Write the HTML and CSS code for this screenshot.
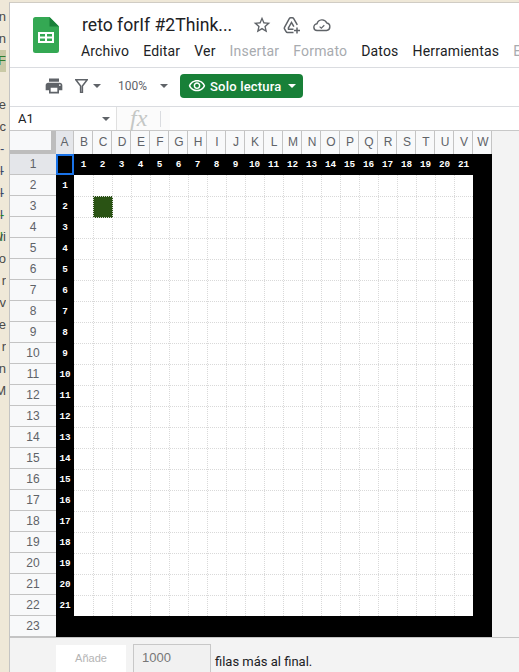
FILE: index.html
```html
<!DOCTYPE html>
<html lang="en">
<head>
  <meta charset="UTF-8">
  <meta name="viewport" content="width=device-width, initial-scale=1.0">
  <title>reto forIf #2ThinkBig</title>
  <link rel="stylesheet" href="styles.css">
</head>
<body>

  <div class="side">
    <div class="side-line">n</div>
    <div class="side-line">n</div>
    <div class="side-line side-active">F</div>
    <div class="side-line"></div>
    <div class="side-line">re</div>
    <div class="side-line">ic</div>
    <div class="side-line side-blue">-l</div>
    <div class="side-line side-blue">-l</div>
    <div class="side-line side-blue">-l</div>
    <div class="side-line side-green">-l</div>
    <div class="side-line">vi</div>
    <div class="side-line">o</div>
    <div class="side-line">r</div>
    <div class="side-line">v</div>
    <div class="side-line">e</div>
    <div class="side-line">r</div>
    <div class="side-line">n</div>
    <div class="side-line">M</div>
  </div>

  <div class="main">

    <header class="docs-header">
      <svg class="logo" width="26" height="36" viewBox="0 0 26 36">
        <path d="M16.5 0H2.5A2.5 2.5 0 0 0 0 2.5v31A2.5 2.5 0 0 0 2.5 36h21a2.5 2.5 0 0 0 2.5-2.5V9.5z" fill="#34a853"/>
        <path d="M16.5 0v9.5H26z" fill="#188038"/>
        <path d="M5 15h16v11H5zM7 17v2.5h5V17zM14 17v2.5h5V17zM7 21.5V24h5v-2.5zM14 21.5V24h5v-2.5z" fill="#fff" fill-rule="evenodd"/>
      </svg>
      <div class="header-text">
        <div class="title-row">
          <span class="doc-title">reto forIf #2Think...</span>
          <svg class="star" width="20" height="20" viewBox="0 0 24 24" fill="#5f6368">
            <path d="M22 9.24l-7.19-.62L12 2 9.19 8.63 2 9.24l5.46 4.73L5.82 21 12 17.27 18.18 21l-1.63-7.03L22 9.24zM12 15.4l-3.76 2.27 1-4.28-3.32-2.88 4.38-.38L12 6.1l1.71 4.04 4.38.38-3.32 2.88 1 4.28L12 15.4z"/>
          </svg>
          <svg class="drive-add" width="18" height="18" viewBox="0 0 18 18" fill="none" stroke="#5f6368" stroke-width="1.5">
            <path d="M10.5 16.5H4.5a1.6 1.6 0 0 1-1.4-.8l-1.6-2.8a1.6 1.6 0 0 1 0-1.6L6.3 2.6a1.6 1.6 0 0 1 1.4-.8h1.6a1.6 1.6 0 0 1 1.4.8l3.6 6.2"/>
            <path d="M4.8 13.2h5.7M5 12.6L8.5 6.5l2.4 4.1"/>
            <path d="M14 11.5v6M11 14.5h6"/>
          </svg>
          <svg class="cloud" width="18" height="18" viewBox="0 0 18 18" fill="none" stroke="#5f6368" stroke-width="1.4">
            <path d="M4.5 14.5a3.4 3.4 0 0 1-.5-6.8A5.2 5.2 0 0 1 13.8 7a3.8 3.8 0 0 1-.3 7.5z"/>
            <path d="M6.6 10.6l1.7 1.5 3-2.9" stroke-width="1.2"/>
          </svg>
        </div>
        <nav class="menu">
          <span class="menu-item">Archivo</span>
          <span class="menu-item">Editar</span>
          <span class="menu-item">Ver</span>
          <span class="menu-item off">Insertar</span>
          <span class="menu-item off">Formato</span>
          <span class="menu-item">Datos</span>
          <span class="menu-item">Herramientas</span>
          <span class="menu-item off">Extensiones</span>
        </nav>
      </div>
    </header>

    <div class="toolbar">
      <svg class="print-icon" width="20" height="20" viewBox="0 0 24 24" fill="#5f6368">
        <path d="M19 8H5c-1.66 0-3 1.34-3 3v6h4v4h12v-4h4v-6c0-1.66-1.34-3-3-3zm-3 11H8v-5h8v5zm3-7c-.55 0-1-.45-1-1s.45-1 1-1 1 .45 1 1-.45 1-1 1zm-1-9H6v4h12V3z"/>
      </svg>
      <svg class="filter-icon" width="13" height="14" viewBox="0 0 13 14" fill="none" stroke="#5f6368" stroke-width="1.5">
        <path d="M.8.8h11.4L7.4 7v6.5H5.6V7z"/>
      </svg>
      <span class="caret filter-caret"></span>
      <span class="zoom-val">100%</span>
      <span class="caret zoom-caret"></span>
      <div class="mode-btn">
        <svg width="18" height="18" viewBox="0 0 24 24" fill="#fff">
          <path d="M12 6c3.79 0 7.17 2.13 8.82 5.5C19.17 14.87 15.79 17 12 17s-7.17-2.13-8.82-5.5C4.83 8.13 8.21 6 12 6m0-2C7 4 2.73 7.11 1 11.5 2.73 15.89 7 19 12 19s9.27-3.11 11-7.5C21.27 7.11 17 4 12 4zm0 5c1.38 0 2.5 1.12 2.5 2.5S13.38 14 12 14s-2.5-1.12-2.5-2.5S10.62 9 12 9m0-2c-2.48 0-4.5 2.02-4.5 4.5S9.52 16 12 16s4.5-2.02 4.5-4.5S14.48 7 12 7z"/>
        </svg>
        <span class="mode-label">Solo lectura</span>
        <span class="caret caret-white"></span>
      </div>
    </div>

    <div class="formula-bar">
      <span class="name-box">A1</span>
      <span class="caret name-caret"></span>
      <div class="fx-box">
        <span class="fx">fx</span>
      </div>
    </div>

    <div class="col-headers">
      <div class="corner"></div>
      <div class="col-head col-a active">A</div>
      <div class="col-head">B</div>
      <div class="col-head">C</div>
      <div class="col-head">D</div>
      <div class="col-head">E</div>
      <div class="col-head">F</div>
      <div class="col-head">G</div>
      <div class="col-head">H</div>
      <div class="col-head">I</div>
      <div class="col-head">J</div>
      <div class="col-head">K</div>
      <div class="col-head">L</div>
      <div class="col-head">M</div>
      <div class="col-head">N</div>
      <div class="col-head">O</div>
      <div class="col-head">P</div>
      <div class="col-head">Q</div>
      <div class="col-head">R</div>
      <div class="col-head">S</div>
      <div class="col-head">T</div>
      <div class="col-head">U</div>
      <div class="col-head">V</div>
      <div class="col-head">W</div>
    </div>

    <div class="sheet">
      <div class="row-headers">
        <div class="row-head active">1</div>
        <div class="row-head">2</div>
        <div class="row-head">3</div>
        <div class="row-head">4</div>
        <div class="row-head">5</div>
        <div class="row-head">6</div>
        <div class="row-head">7</div>
        <div class="row-head">8</div>
        <div class="row-head">9</div>
        <div class="row-head">10</div>
        <div class="row-head">11</div>
        <div class="row-head">12</div>
        <div class="row-head">13</div>
        <div class="row-head">14</div>
        <div class="row-head">15</div>
        <div class="row-head">16</div>
        <div class="row-head">17</div>
        <div class="row-head">18</div>
        <div class="row-head">19</div>
        <div class="row-head">20</div>
        <div class="row-head">21</div>
        <div class="row-head">22</div>
        <div class="row-head">23</div>
      </div>

      <div class="cells">
        <div class="top-labels">
          <div class="selected-cell"></div>
          <span>1</span><span>2</span><span>3</span><span>4</span><span>5</span><span>6</span><span>7</span>
          <span>8</span><span>9</span><span>10</span><span>11</span><span>12</span><span>13</span><span>14</span>
          <span>15</span><span>16</span><span>17</span><span>18</span><span>19</span><span>20</span><span>21</span>
        </div>
        <div class="cells-mid">
          <div class="left-labels">
            <span>1</span><span>2</span><span>3</span><span>4</span><span>5</span><span>6</span><span>7</span>
            <span>8</span><span>9</span><span>10</span><span>11</span><span>12</span><span>13</span><span>14</span>
            <span>15</span><span>16</span><span>17</span><span>18</span><span>19</span><span>20</span><span>21</span>
          </div>
          <svg class="canvas" width="399" height="441" viewBox="0 0 399 441">
            <rect class="green-cell" x="19" y="21" width="20" height="22"/>
            <path class="gridlines" d="M19.5 0V441M38.5 0V441M57.5 0V441M76.5 0V441M95.5 0V441M114.5 0V441M133.5 0V441M152.5 0V441M171.5 0V441M190.5 0V441M209.5 0V441M228.5 0V441M247.5 0V441M266.5 0V441M285.5 0V441M304.5 0V441M323.5 0V441M342.5 0V441M361.5 0V441M380.5 0V441"/>
            <path class="gridlines" d="M0 21.5H399M0 42.5H399M0 63.5H399M0 84.5H399M0 105.5H399M0 126.5H399M0 147.5H399M0 168.5H399M0 189.5H399M0 210.5H399M0 231.5H399M0 252.5H399M0 273.5H399M0 294.5H399M0 315.5H399M0 336.5H399M0 357.5H399M0 378.5H399M0 399.5H399M0 420.5H399"/>
          </svg>
        </div>
        <div class="bottom-bar"></div>
      </div>
    </div>

    <div class="add-rows">
      <div class="add-btn">Añade</div>
      <div class="add-input">1000</div>
      <span class="add-text">filas más al final.</span>
    </div>

  </div>

</body>
</html>
```

FILE: styles.css
```css
body {
  margin: 0;
  width: 519px;
  height: 672px;
  overflow: hidden;
  display: flex;
  background-color: #efe8d8;
  font-family: 'Liberation Sans', Arial, sans-serif;
}

/* sliver of the window behind */
.side {
  width: 6px;
  padding-top: 6px;
  margin-right: 3px;
  flex-shrink: 0;
  overflow: hidden;
}

.side-line {
  height: 22px;
  line-height: 22px;
  font-size: 13px;
  color: #4a4a4a;
  display: flex;
  justify-content: flex-end;
}

.side-active {
  background-color: #c9c9a6;
  color: #2f7d2f;
}

.side-blue {
  color: #3a4a6a;
}

.side-green {
  color: #1a8a2a;
}

.main {
  width: 510px;
  flex-shrink: 0;
  margin-top: 2px;
  border-top: 1px solid #d0ccc4;
  border-left: 1px solid #c4c4c4;
  box-sizing: border-box;
  background-color: #fff;
  display: flex;
  flex-direction: column;
  overflow: hidden;
}

/* Header */
.docs-header {
  height: 65px;
  flex-shrink: 0;
  display: flex;
  box-sizing: border-box;
  border-bottom: 1px solid #dadce0;
  white-space: nowrap;
}

.logo {
  margin: 14px 0 0 23px;
  flex-shrink: 0;
}

.header-text {
  margin-left: 23px;
  margin-top: 10px;
}

.title-row {
  display: flex;
  align-items: center;
  height: 24px;
}

.doc-title {
  font-family: 'Roboto', sans-serif;
  font-size: 17.6px;
  color: #202124;
  width: 170px;
}

.drive-add {
  margin-left: 11px;
}

.cloud {
  margin-left: 12px;
}

.menu {
  display: flex;
  margin-top: 5px;
  margin-left: -1px;
  font-family: 'Roboto', sans-serif;
  font-size: 14px;
  letter-spacing: 0.18px;
  line-height: 18px;
  color: #202124;
}

.menu-item {
  margin-right: 14px;
}

.menu-item.off {
  color: #a8abaf;
}

/* Toolbar */
.toolbar {
  height: 39px;
  flex-shrink: 0;
  display: flex;
  align-items: center;
  box-sizing: border-box;
  border-bottom: 1px solid #dadce0;
  padding: 0 0 2px 34px;
}

.filter-icon {
  margin-left: 11px;
}

.caret {
  width: 0;
  height: 0;
  border-left: 4px solid transparent;
  border-right: 4px solid transparent;
  border-top: 4px solid #5f6368;
  flex-shrink: 0;
}

.filter-caret {
  margin-left: 5px;
}

.zoom-val {
  margin-left: 17px;
  font-family: 'Roboto', sans-serif;
  font-size: 12px;
  color: #5f6368;
  width: 42px;
}

.mode-btn {
  margin-left: 12px;
  width: 123px;
  height: 24px;
  box-sizing: border-box;
  padding-left: 8px;
  background-color: #188038;
  border-radius: 4px;
  display: flex;
  align-items: center;
  gap: 4px;
  color: #fff;
  font-family: 'Roboto', sans-serif;
  font-size: 13px;
  font-weight: 500;
}

.mode-label {
  letter-spacing: 0.2px;
}

.caret-white {
  border-top-color: #fff;
  margin-left: 2px;
}

/* Formula bar */
.formula-bar {
  height: 24px;
  flex-shrink: 0;
  display: flex;
  align-items: center;
  box-sizing: border-box;
  border-bottom: 1px solid #c8c8c8;
}

.name-box {
  margin-left: 8px;
  width: 84px;
  font-family: 'Roboto', sans-serif;
  font-size: 13px;
  color: #202124;
}

.name-caret {
  margin-right: 6px;
}

.fx-box {
  width: 54px;
  height: 23px;
  box-sizing: border-box;
  border-left: 1px solid #e0e0e0;
  background-color: #fbfbfb;
  padding-left: 13px;
  display: flex;
  align-items: center;
}

.fx-box::after {
  content: "";
  width: 1px;
  height: 16px;
  margin-left: 13px;
  background-color: #dadce0;
}

.fx {
  font-family: 'Liberation Serif', serif;
  font-style: italic;
  font-size: 24px;
  line-height: 23px;
  color: #c4c7c5;
}

/* Column headers */
.col-headers {
  height: 23px;
  flex-shrink: 0;
  display: flex;
  background-color: #f3f3f3;
}

.corner {
  width: 46px;
  height: 23px;
  box-sizing: border-box;
  background-color: #f8f9fa;
  border-right: 5px solid #bdbdbd;
  border-bottom: 4px solid #bdbdbd;
}

.col-head {
  width: 19px;
  height: 23px;
  box-sizing: border-box;
  padding-left: 2px;
  border-right: 1px solid #c4c4c4;
  background-color: #f8f9fa;
  font-size: 12px;
  line-height: 23px;
  text-align: center;
  color: #5f6368;
}

.col-a {
  width: 18px;
  padding-left: 0;
}

.active {
  background-color: #e4e6ea;
}

/* Sheet */
.sheet {
  display: flex;
  flex-shrink: 0;
  background-color: #f3f3f3;
}

.row-headers {
  width: 46px;
  flex-shrink: 0;
}

.row-head {
  height: 21px;
  box-sizing: border-box;
  border-bottom: 1px solid #c4c4c4;
  background-color: #f8f9fa;
  font-size: 12px;
  line-height: 21px;
  text-align: center;
  color: #5f6368;
}

.row-head.active {
  background-color: #e4e6ea;
}

.cells {
  width: 436px;
  background-color: #000;
  font-family: 'Liberation Mono', 'Courier New', monospace;
  font-size: 9.33px;
  font-weight: bold;
  color: #fff;
}

.top-labels {
  height: 21px;
  display: flex;
}

.top-labels span {
  width: 19px;
  line-height: 21px;
  text-align: center;
}

.selected-cell {
  width: 18px;
  height: 21px;
  box-sizing: border-box;
  border: 2px solid #1a73e8;
}

.cells-mid {
  display: flex;
}

.left-labels {
  width: 18px;
  display: flex;
  flex-direction: column;
}

.left-labels span {
  height: 21px;
  line-height: 21px;
  text-align: center;
}

.canvas {
  display: block;
  background-color: #fff;
}

.gridlines {
  fill: none;
  stroke: #d9d9d9;
  stroke-width: 1;
  stroke-dasharray: 1 1;
}

.green-cell {
  fill: #2a5314;
}

.bottom-bar {
  height: 21px;
}

/* Add rows */
.add-rows {
  flex: 1;
  display: flex;
  background-color: #f3f3f3;
  padding: 7px 0 0 46px;
  border-top: 1px solid #c4c4c4;
}

.add-btn {
  width: 70px;
  height: 30px;
  background-color: #fff;
  font-size: 11px;
  line-height: 27px;
  text-align: center;
  color: #b4b4b4;
}

.add-input {
  width: 78px;
  height: 30px;
  box-sizing: border-box;
  margin-left: 7px;
  margin-top: -1px;
  border: 1px solid #c8c8c8;
  background-color: #f1f1f1;
  font-size: 13px;
  line-height: 26px;
  padding-left: 8px;
  color: #777;
}

.add-text {
  margin-left: 4px;
  margin-top: 9px;
  font-family: 'Roboto', sans-serif;
  font-size: 13px;
  color: #202124;
}
```
